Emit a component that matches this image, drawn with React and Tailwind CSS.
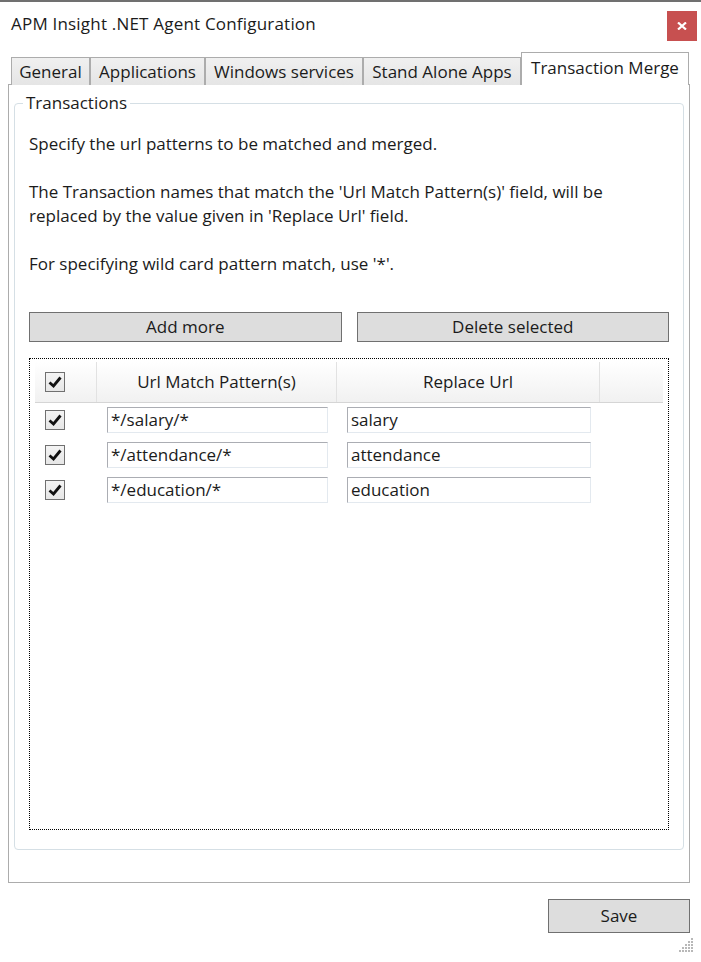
import { useState } from "react";

const Check = () => (
  <svg width="14" height="12" viewBox="0 0 14 12">
    <path d="M1.5 6.5 L5.5 10 L12.5 1.5" fill="none" stroke="#111" strokeWidth="2.8" />
  </svg>
);

const CheckBox = ({ checked, onClick }) => (
  <button
    onClick={onClick}
    className="w-[20px] h-[20px] border border-[#707070] bg-gradient-to-b from-[#f4f4f4] to-[#e6e6e6] flex items-center justify-center"
  >
    {checked && <Check />}
  </button>
);

const TextBox = ({ value, width }) => (
  <div
    className={`${width} h-[26px] border-t border-l border-[#abadb3] border-r-[#e3e9ef] border-b-[#e3e9ef] border-r border-b pl-[3px] leading-[24px] whitespace-nowrap overflow-hidden bg-white`}
  >
    {value}
  </div>
);

const tabs = [
  { label: "General", w: "w-[79px]" },
  { label: "Applications", w: "w-[115px]" },
  { label: "Windows services", w: "w-[158px]" },
  { label: "Stand Alone Apps", w: "w-[158px]" },
];

const initialRows = [
  { pattern: "*/salary/*", replace: "salary", checked: true },
  { pattern: "*/attendance/*", replace: "attendance", checked: true },
  { pattern: "*/education/*", replace: "education", checked: true },
];

const App = () => {
  const [rows, setRows] = useState(initialRows);
  const allChecked = rows.every((r) => r.checked);

  const toggle = (i) =>
    setRows(rows.map((r, j) => (j === i ? { ...r, checked: !r.checked } : r)));

  return (
    <div className="w-[701px] h-[962px] bg-white border-t-2 border-[#707070] text-[#1b1b1b] font-['Open_Sans',sans-serif] text-[17px] flex flex-col">
      {/* Title bar */}
      <div className="flex items-start justify-between h-[51px]">
        <div className="pl-[11px] pt-[10px] leading-[24px] tracking-[0.2px]">
          APM Insight .NET Agent Configuration
        </div>
        <button className="mt-[9px] mr-[4px] w-[30px] h-[30px] bg-[#c75050] flex items-center justify-center">
          <svg width="10" height="8" viewBox="0 0 10 8">
            <path d="M1 0.5 L9 7.5 M9 0.5 L1 7.5" stroke="#fff" strokeWidth="2.2" />
          </svg>
        </button>
      </div>

      {/* Tabs */}
      <div className="flex items-end pl-[11px] h-[32px] -mb-px relative">
        {tabs.map((t) => (
          <div
            key={t.label}
            className={`${t.w} h-[28px] border border-b-0 border-[#acacac] bg-gradient-to-b from-[#f0f0f0] to-[#e5e5e5] text-center leading-[28px] whitespace-nowrap`}
          >
            {t.label}
          </div>
        ))}
        <div className="w-[168px] h-[33px] border border-b-0 border-[#acacac] bg-white text-center leading-[30px] whitespace-nowrap">
          Transaction Merge
        </div>
      </div>

      {/* Tab panel */}
      <div className="ml-[8px] w-[682px] h-[799px] border border-[#acacac] flex flex-col">
        <fieldset className="mt-[6px] mx-[5px] h-[759px] border border-[#d5dfe5] rounded-[4px] px-[14px] pb-[19px] flex flex-col">
          <legend className="ml-[-6px] px-[3px] leading-[24px]">Transactions</legend>

          <div className="pt-[17px] leading-[24px] whitespace-nowrap">
            <p>Specify the url patterns to be matched and merged.</p>
            <p className="mt-[24px]">
              The Transaction names that match the 'Url Match Pattern(s)' field, will be
              <br />
              replaced by the value given in 'Replace Url' field.
            </p>
            <p className="mt-[24px]">For specifying wild card pattern match, use '*'.</p>
          </div>

          <div className="grid grid-cols-2 gap-[15px] mt-[36px]">
            <button className="h-[30px] bg-[#dddddd] border border-[#707070] leading-[28px]">
              Add more
            </button>
            <button className="h-[30px] bg-[#dddddd] border border-[#707070] leading-[28px]">
              Delete selected
            </button>
          </div>

          {/* Data grid */}
          <div className="mt-[16px] h-[472px] border border-dotted border-black pt-[3px] px-[5px]">
            <div className="flex h-[41px] bg-gradient-to-b from-white to-[#f1f1f1] border-b border-[#d5d5d5]">
              <div className="w-[62px] border-r border-[#e2e2e2] flex items-center pl-[10px]">
                <CheckBox
                  checked={allChecked}
                  onClick={() => setRows(rows.map((r) => ({ ...r, checked: !allChecked })))}
                />
              </div>
              <div className="w-[240px] border-r border-[#e2e2e2] flex items-center justify-center">
                Url Match Pattern(s)
              </div>
              <div className="w-[263px] border-r border-[#e2e2e2] flex items-center justify-center">
                Replace Url
              </div>
              <div className="flex-1" />
            </div>

            {rows.map((r, i) => (
              <div key={i} className="flex h-[35px] pt-[4px]">
                <div className="w-[62px] h-[26px] flex items-center pl-[10px]">
                  <CheckBox checked={r.checked} onClick={() => toggle(i)} />
                </div>
                <div className="w-[240px] pl-[10px]">
                  <TextBox value={r.pattern} width="w-[221px]" />
                </div>
                <div className="w-[263px] pl-[10px]">
                  <TextBox value={r.replace} width="w-[244px]" />
                </div>
              </div>
            ))}
          </div>
        </fieldset>
      </div>

      {/* Footer */}
      <div className="flex justify-end mt-[16px] mr-[11px]">
        <button className="w-[142px] h-[34px] bg-[#dddddd] border border-[#707070] leading-[32px]">
          Save
        </button>
      </div>
      <div className="flex justify-end mt-[4px] mr-[8px]">
        <svg width="15" height="15" viewBox="0 0 15 15">
          {[
            [13, 1], [10, 4], [13, 4], [7, 7], [10, 7], [13, 7],
            [4, 10], [7, 10], [10, 10], [13, 10],
            [1, 13], [4, 13], [7, 13], [10, 13], [13, 13],
          ].map(([x, y], k) => (
            <rect key={k} x={x} y={y} width="2" height="2" fill="#b8b8b8" />
          ))}
        </svg>
      </div>
    </div>
  );
};

export default App;
